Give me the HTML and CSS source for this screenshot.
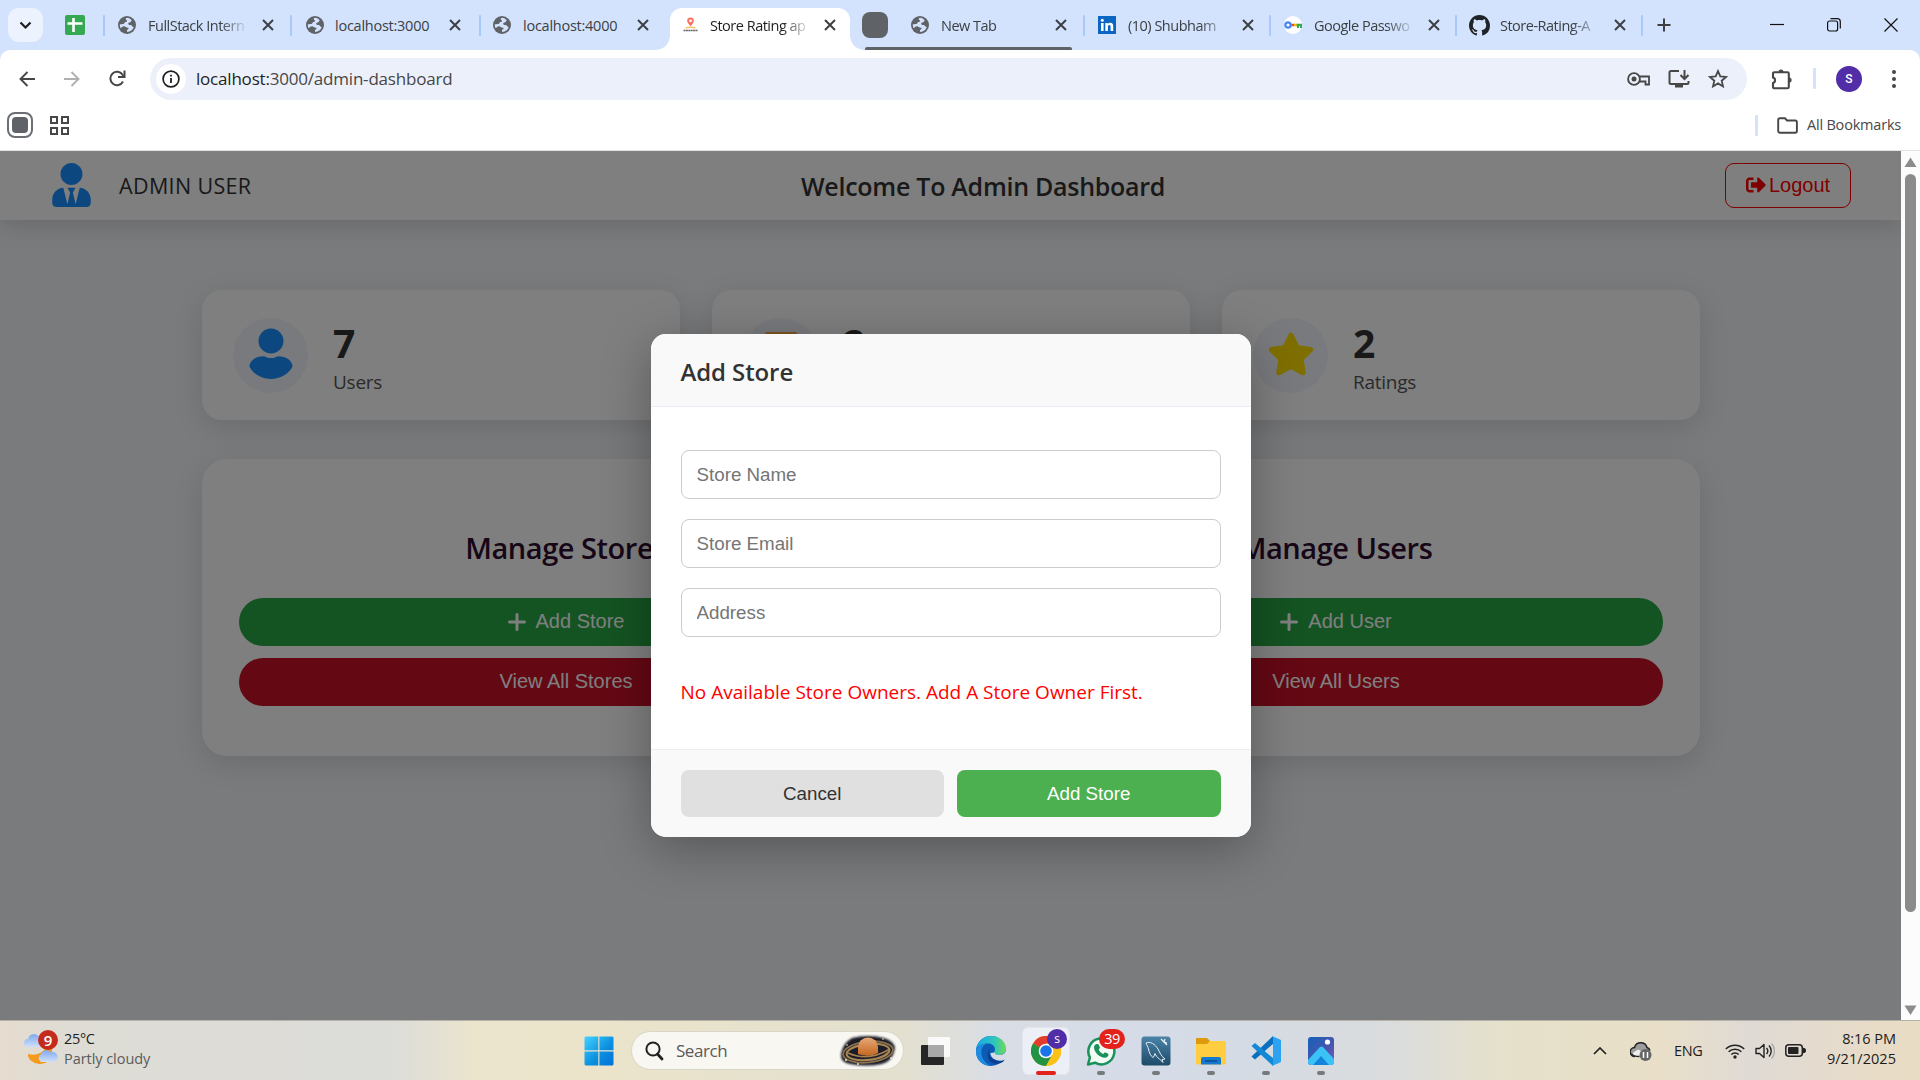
FILE: index.html
```html
<!DOCTYPE html>
<html lang="en">
<head>
<meta charset="utf-8">
<title>Store Rating app</title>
<link rel="stylesheet" href="styles.css">
</head>
<body>
<svg class="defs" width="0" height="0" aria-hidden="true">
  <symbol id="globe" viewBox="0 0 18 18"><circle cx="9" cy="9" r="9" fill="#5f6368"/><path d="M9.500 1.800c-2 .2-2.200 1.400-1.200 2.100 1.500 1 .2 2-.8 2.200-1.300.2-.6 1.700-2 1.800-1.400.1-2 .2-3.700.3a7.300 7.300 0 0 0 .8 4.100c1.200-.6 2.100-2.600 4.200-1.800 1.500.6 2 1.400 3.500 1.300 1 .3-.2 1.400-.9 2-.7.600-.4 1.400-.2 2.300 3.200-.2 5.700-2.400 6.600-5.100-.9-.1-1.200-.3-1.700-1.100-.8-1.300-2.300-.6-3.300-1.200-1.200-.8-.6-2.200.7-2.300 1.300 0 1.500-1.100 2.200-2.200a7 7 0 0 0-4.200-2.400z" fill="#d3e3fd"/></symbol>
  <symbol id="x" viewBox="0 0 12 12"><path d="M1 1l10 10M11 1L1 11" stroke="#3c4043" stroke-width="2" fill="none"/></symbol>
  <symbol id="plus" viewBox="0 0 18 18"><path d="M9 1.500v15M1.500 9h15" stroke="#fff" stroke-width="3" stroke-linecap="round"/></symbol>
</svg>

<div class="tabstrip">
  <div class="tab-search"><svg width="13" height="9" viewBox="0 0 13 9"><path d="M1.500 1.500l5 5 5-5" stroke="#1f1f1f" stroke-width="2.200" fill="none"/></svg></div>
  <div class="pinned"><svg width="20" height="20" viewBox="0 0 20 20"><rect width="20" height="20" rx="2" fill="#34a853"/><path d="M8.500 3v14M2.500 8.500h15" stroke="#fff" stroke-width="2.600"/></svg></div>
  <i class="sep"></i>
  <div class="tab t184"><svg class="fav"><use href="#globe"/></svg><span class="label">FullStack Intern</span><svg class="close"><use href="#x"/></svg></div>
  <i class="sep"></i>
  <div class="tab t186"><svg class="fav"><use href="#globe"/></svg><span class="label full">localhost:3000</span><svg class="close"><use href="#x"/></svg></div>
  <i class="sep"></i>
  <div class="tab t188"><svg class="fav"><use href="#globe"/></svg><span class="label full">localhost:4000</span><svg class="close"><use href="#x"/></svg></div>
  <div class="tab active"><svg class="fav" viewBox="0 0 18 18"><path d="M8.500 1.500a3.300 3.300 0 0 1 3.300 3.300c0 2.300-3.300 5.400-3.300 5.400s-3.300-3.100-3.300-5.400A3.300 3.300 0 0 1 8.500 1.500z" fill="#ff7061"/><circle cx="8.500" cy="4.800" r="1.400" fill="#fff"/><path d="M3.500 12q5-1.500 10 0" stroke="#ffc266" stroke-width="1.500" fill="none"/><path d="M1.500 14.500h14" stroke="#666" stroke-width="1.700" stroke-dasharray="2 .4"/></svg><span class="label">Store Rating ap</span><svg class="close"><use href="#x"/></svg></div>
  <div class="group"><i class="chip"></i>
    <div class="tab grouped"><svg class="fav"><use href="#globe"/></svg><span class="label">New Tab</span><svg class="close"><use href="#x"/></svg></div>
  </div>
  <i class="sep"></i>
  <div class="tab"><svg class="fav" viewBox="0 0 18 18"><rect width="18" height="18" fill="#0a66c2"/><path d="M3 7h2.600v8H3zM7.300 7h2.500v1.200C10.300 7.300 11.200 6.800 12.300 6.800c2.200 0 2.900 1.400 2.900 3.600V15h-2.600v-4.200c0-1.200-.3-1.900-1.200-1.900-1.100 0-1.500.8-1.500 1.900V15H7.300z" fill="#fff"/><circle cx="4.300" cy="4.300" r="1.500" fill="#fff"/></svg><span class="label">(10) Shubham</span><svg class="close"><use href="#x"/></svg></div>
  <i class="sep"></i>
  <div class="tab"><svg class="fav" viewBox="0 0 18 18"><circle cx="9" cy="9" r="9" fill="#fff"/><circle cx="4" cy="9" r="2.700" stroke="#4285f4" stroke-width="2.200" fill="none"/><path d="M7.500 9h3.500" stroke="#ea4335" stroke-width="2.400"/><path d="M10 9h3" stroke="#fbbc04" stroke-width="2.400"/><path d="M12.500 7.800H18V12h-2v-2h-1v2h-2z" fill="#34a853"/></svg><span class="label">Google Passwo</span><svg class="close"><use href="#x"/></svg></div>
  <i class="sep"></i>
  <div class="tab"><svg class="fav github" viewBox="0 0 16 16"><path fill="#1f2328" d="M8 0C3.580 0 0 3.580 0 8c0 3.540 2.290 6.530 5.470 7.590.4.070.55-.17.55-.38 0-.19-.01-.82-.01-1.490-2.010.37-2.530-.49-2.690-.94-.09-.23-.48-.94-.82-1.130-.28-.15-.68-.52-.01-.53.63-.01 1.080.58 1.230.82.72 1.210 1.870.87 2.330.66.070-.52.28-.87.51-1.070-1.780-.2-3.640-.89-3.640-3.950 0-.87.31-1.590.82-2.150-.08-.2-.36-1.020.08-2.120 0 0 .67-.21 2.200.82.64-.18 1.320-.27 2-.27s1.360.09 2 .27c1.530-1.040 2.200-.82 2.200-.82.44 1.100.16 1.920.08 2.120.51.56.82 1.270.82 2.150 0 3.070-1.870 3.750-3.650 3.950.29.25.54.73.54 1.480 0 1.070-.01 1.930-.01 2.200 0 .21.15.46.55.38A8.010 8.010 0 0 0 16 8c0-4.420-3.580-8-8-8z"/></svg><span class="label">Store-Rating-A</span><svg class="close"><use href="#x"/></svg></div>
  <i class="sep"></i>
  <svg class="newtab" width="14" height="14" viewBox="0 0 14 14"><path d="M7 .5v13M.5 7h13" stroke="#3c4043" stroke-width="2"/></svg>
  <div class="winctl">
    <svg width="14" height="14"><path d="M0 6.500h14" stroke="#111" stroke-width="1.200"/></svg>
    <svg width="14" height="14" viewBox="0 0 14 14"><rect x=".6" y="3" width="10" height="10" rx="2" fill="none" stroke="#111" stroke-width="1.200"/><path d="M3.500.7h6.800a3 3 0 0 1 3 3v6.800" fill="none" stroke="#111" stroke-width="1.200"/></svg>
    <svg width="14" height="14" viewBox="0 0 14 14"><path d="M.5.5l13 13M13.500.5l-13 13" stroke="#111" stroke-width="1.200"/></svg>
  </div>
</div>

<div class="chrome">
  <div class="toolbar">
    <svg width="16" height="16" viewBox="0 0 16 16"><path d="M16 8H1.500M8.500 1L1.500 8l7 7" stroke="#474747" stroke-width="1.900" fill="none"/></svg>
    <svg width="16" height="16" viewBox="0 0 16 16"><path d="M0 8h14.500M7.500 1l7 7-7 7" stroke="#b0b0b0" stroke-width="1.900" fill="none"/></svg>
    <svg width="17" height="17" viewBox="0 0 17 17"><path d="M14 11.500A6.700 6.700 0 1 1 13.800 5L15 6.500" stroke="#474747" stroke-width="2" fill="none"/><path d="M15.500.5v6.500H9" stroke="#474747" stroke-width="2" fill="none"/></svg>
    <div class="omnibox">
      <div class="info"><svg width="18" height="18" viewBox="0 0 18 18"><circle cx="9" cy="9" r="7.900" stroke="#1f1f1f" stroke-width="1.700" fill="none"/><path d="M9 8v5M9 4.800v1.800" stroke="#1f1f1f" stroke-width="1.800"/></svg></div>
      <span class="url"><b>localhost:</b>3000/admin-dashboard</span>
      <svg width="23" height="16" viewBox="0 0 23 16"><circle cx="7" cy="8" r="5.900" stroke="#474747" stroke-width="1.900" fill="none"/><circle cx="7" cy="8" r="2.500" fill="#474747"/><path d="M12.500 5.500H22v8h-3.500v-3h-6" stroke="#474747" stroke-width="1.800" fill="none"/></svg>
      <svg width="22" height="20" viewBox="0 0 22 20"><path d="M11 2H3a1.500 1.500 0 0 0-1.500 1.500v10A1.500 1.500 0 0 0 3 15h16a1.500 1.500 0 0 0 1.500-1.500V12" stroke="#474747" stroke-width="2" fill="none"/><path d="M7 15h8v3.500H7z" fill="#474747"/><path d="M16.500 1v8.500M12.500 6l4 4 4-4" stroke="#474747" stroke-width="2" fill="none"/></svg>
      <svg width="20" height="19" viewBox="0 0 20 19"><path d="M10 2l2.300 5.400 5.800.5-4.400 3.800 1.300 5.700-5-3-5 3 1.300-5.700L1.900 7.900l5.800-.5z" stroke="#474747" stroke-width="1.800" fill="none"/></svg>
    </div>
    <svg class="puzzle" width="22" height="22" viewBox="0 0 22 22"><path d="M2 5.500A1.300 1.300 0 0 1 3.300 4.200H16.500a1.300 1.300 0 0 1 1.300 1.300V19a1.300 1.300 0 0 1-1.300 1.300H3.300A1.300 1.300 0 0 1 2 19v-4a2.800 2.800 0 0 0 0-5.400z" stroke="#474747" stroke-width="2.100" fill="none"/><path d="M7.500 4a2.500 2.500 0 0 1 5 0zM18 9.500a2.600 2.600 0 0 1 0 5.200z" fill="#474747"/></svg>
    <i class="sep pale"></i>
    <div class="avatar">S</div>
    <svg class="menu" width="6" height="20" viewBox="0 0 6 20"><g fill="#474747"><circle cx="3" cy="3" r="2"/><circle cx="3" cy="10" r="2"/><circle cx="3" cy="17" r="2"/></g></svg>
  </div>
  <div class="bookmarks">
    <div class="bm-chip"><i></i></div>
    <svg width="19" height="19" viewBox="0 0 19 19"><g fill="none" stroke="#474747" stroke-width="2"><rect x="1" y="1" width="6" height="6"/><rect x="12" y="1" width="6" height="6"/><rect x="1" y="12" width="6" height="6"/><rect x="12" y="12" width="6" height="6"/></g></svg>
    <i class="sep pale"></i>
    <svg width="21" height="17" viewBox="0 0 21 17"><path d="M1.200 3A1.700 1.700 0 0 1 2.900 1.300H8L10 3.500h8.200A1.700 1.700 0 0 1 19.900 5.200v8.900a1.700 1.700 0 0 1-1.700 1.700H2.900a1.700 1.700 0 0 1-1.700-1.700z" stroke="#474747" stroke-width="1.900" fill="none"/></svg>
    <span class="allbm">All Bookmarks</span>
  </div>
</div>

<div class="viewport">
  <div class="page">
    <header class="header">
      <svg class="tie" width="39" height="44" viewBox="0 0 448 512"><path fill="#1890ff" d="M224 256c70.700 0 128-57.300 128-128S294.700 0 224 0 96 57.300 96 128s57.300 128 128 128zm95.800 32.600L272 480l-32-136 32-56h-96l32 56-32 136-47.800-191.400C56.900 292 0 350.300 0 422.400V464c0 26.500 21.500 48 48 48h352c26.500 0 48-21.500 48-48v-41.600c0-72.100-56.900-130.400-128.200-133.800z"/></svg>
      <span class="username">ADMIN USER</span>
      <h1>Welcome To Admin Dashboard</h1>
      <button class="logout"><svg width="20" height="20" viewBox="0 0 512 512"><path fill="#f00" d="M497 273L329 441c-15 15-41 4.500-41-17v-96H152c-13.300 0-24-10.700-24-24v-96c0-13.300 10.700-24 24-24h136V88c0-21.400 25.900-32 41-17l168 168c9.300 9.400 9.300 24.600 0 34zM192 436v-40c0-6.600-5.400-12-12-12H96c-17.700 0-32-14.300-32-32V160c0-17.700 14.300-32 32-32h84c6.600 0 12-5.400 12-12V76c0-6.600-5.400-12-12-12H96c-53 0-96 43-96 96v192c0 53 43 96 96 96h84c6.600 0 12-5.400 12-12z"/></svg>Logout</button>
    </header>
    <main class="content">
      <section class="stats">
        <article class="stat"><div class="circle"><svg width="44" height="52" viewBox="0 0 44 52"><circle cx="22" cy="13" r="12.500" fill="#1890ff"/><path d="M12 28.500q3-.8 5 .4 5 2.400 10 0 2-1.200 5-.4C39 29 43.500 34 43.500 38.500 40 46 31 51 22 51S4 46 .5 38.500C.5 34 5 29 12 28.500z" fill="#1890ff"/></svg></div><div class="figures"><strong>7</strong><span>Users</span></div></article>
        <article class="stat"><div class="circle"><svg width="48" height="44" viewBox="0 0 48 44"><path d="M9 0h30l8 15a6 6 0 0 1-12 0 6 6 0 0 1-11 0 6 6 0 0 1-11 0 6 6 0 0 1-12 0zM5 23h38v20H5z" fill="#ffa940"/></svg></div><div class="figures"><strong>2</strong><span>Stores</span></div></article>
        <article class="stat"><div class="circle"><svg width="48" height="46" viewBox="0 0 576 512"><path fill="#ffdf00" d="M259.300 17.800L194 150.200 47.900 171.500c-26.200 3.800-36.700 36.100-17.700 54.600l105.700 103-25 145.500c-4.500 26.300 23.200 46 46.400 33.700L288 439.600l130.700 68.700c23.200 12.200 50.900-7.400 46.400-33.700l-25-145.500 105.700-103c19-18.500 8.500-50.800-17.700-54.600L382 150.200 316.700 17.800c-11.700-23.600-45.600-23.900-57.400 0z"/></svg></div><div class="figures"><strong>2</strong><span>Ratings</span></div></article>
      </section>
      <section class="manage">
        <div class="panel"><h2>Manage Stores</h2><button class="pill green"><svg width="18" height="18"><use href="#plus"/></svg>Add Store</button><button class="pill red">View All Stores</button></div>
        <div class="panel"><h2>Manage Users</h2><button class="pill green"><svg width="18" height="18"><use href="#plus"/></svg>Add User</button><button class="pill red">View All Users</button></div>
      </section>
    </main>
    <div class="overlay">
      <form class="modal">
        <h3>Add Store</h3>
        <div class="fields">
          <input type="text" placeholder="Store Name">
          <input type="text" placeholder="Store Email">
          <input type="text" placeholder="Address">
          <p>No Available Store Owners. Add A Store Owner First.</p>
        </div>
        <div class="actions"><button type="button" class="cancel">Cancel</button><button type="button" class="submit">Add Store</button></div>
      </form>
    </div>
  </div>
  <div class="scrollbar"><svg width="13" height="11"><path d="M6.500 .5L12.500 10H.5z" fill="#8b8b8b"/></svg><i></i><svg width="13" height="11"><path d="M.5 .5h12L6.500 10z" fill="#8b8b8b"/></svg></div>
</div>

<div class="taskbar">
  <div class="weather">
    <svg width="36" height="38" viewBox="0 0 36 38"><defs><linearGradient id="cl" x2="0" y2="1"><stop stop-color="#7fa9ec"/><stop offset="1" stop-color="#cfe0fb"/></linearGradient></defs><path d="M4 18a4 4 0 0 1 0-8 6 6 0 0 1 11-2v10z" fill="url(#cl)"/><path d="M28 19v7a12 9.500 0 0 1-24-1c8 2 15-1 17-6z" fill="#f59a1b"/><path d="M17 33a4.500 4.500 0 0 1 0-8 6 6 0 0 1 10-2 5 5 0 0 1 3 10z" fill="url(#cl)"/><circle cx="24" cy="11" r="10" fill="#c42b1c"/><text x="24" y="16.500" text-anchor="middle" class="badge-text">9</text></svg>
    <div class="forecast"><span>25°C</span><small>Partly cloudy</small></div>
  </div>
  <svg class="start" width="30" height="30" viewBox="0 0 30 30"><defs><linearGradient id="win" x2="1" y2="1"><stop stop-color="#45d2ff"/><stop offset=".55" stop-color="#0d91e0"/><stop offset="1" stop-color="#0070d8"/></linearGradient></defs><path fill="url(#win)" d="M1.500.5H14.300V14.300H.5V1.500zM15.400.5H28.500l1 1V14.300H15.400zM.5 15.600H14.300V29.500H1.500l-1-1zM15.400 15.600H29.500V28.500l-1 1H15.400z"/></svg>
  <div class="search">
    <svg width="20" height="20" viewBox="0 0 20 20"><circle cx="9" cy="8" r="6.600" fill="none" stroke="#222" stroke-width="2"/><path d="M13.500 13l4.500 5" stroke="#222" stroke-width="2.800" stroke-linecap="round"/></svg>
    <span>Search</span>
    <svg class="saturn" width="60" height="34" viewBox="0 0 60 34"><defs><filter id="soft" x="-10%" y="-10%" width="120%" height="120%"><feGaussianBlur stdDeviation="1"/></filter><linearGradient id="pl" x2="0" y2="1"><stop stop-color="#e6a878"/><stop offset="1" stop-color="#c4681f"/></linearGradient></defs><path d="M14 4Q30 0 46 4q10 3 11 10-2 13-13 16-16 3-32 0Q2 28 3 20 5 9 14 4z" fill="#1c1a26" filter="url(#soft)"/><g transform="rotate(-6 30 18)" fill="none"><ellipse cx="30" cy="18" rx="25" ry="10.500" stroke="#8a7150" stroke-width="1.800"/><ellipse cx="30" cy="18" rx="21.500" ry="8" stroke="#a88555" stroke-width="2.200"/></g><path d="M20 20V13a10 9.500 0 0 1 20 0v6q-10 5-20 1z" fill="url(#pl)"/><path d="M10 19q20 9 42-4" stroke="#a88050" stroke-width="1.500" fill="none"/><g fill="#ffe9b0"><circle cx="8" cy="26" r="1"/><circle cx="20" cy="30" r=".9"/><circle cx="45" cy="5" r=".8"/><circle cx="53" cy="24" r=".9"/><circle cx="9" cy="11" r=".8"/></g></svg>
  </div>
  <div class="apps">
    <div class="app"><svg width="30" height="30" viewBox="0 0 30 30"><rect x="0" y="9" width="23" height="20" rx="1" fill="#262626"/><rect x="7" y="1" width="22" height="20" rx="1" fill="#fafafa"/><path d="M7 9h16v12H7z" fill="#a9a9a9"/></svg></div>
    <div class="app"><svg width="30" height="30" viewBox="0 0 30 30"><defs><linearGradient id="e1" x2="1"><stop stop-color="#1aa7e8"/><stop offset=".6" stop-color="#2cc5c0"/><stop offset="1" stop-color="#6fdc55"/></linearGradient></defs><circle cx="15" cy="15" r="15" fill="#0c5cb5"/><path d="M0 13A15 15 0 0 1 15 0c9 0 15 6 15 12.500 0 4-3 6.500-7 6.500-3.500 0-5-1.500-5-2.500s1-1.500 1-3.500c0-3-3-5.500-7-5.500C6 7.500 1 10 0 13z" fill="url(#e1)"/><path d="M0 15C1 9 6 7.500 10 8c-4 2-5 6-4.500 10 .6 5 4 9 9 12C6 30-.5 23 0 15z" fill="#1d8be0"/><path d="M15 12c-4 4-1 11 6 12.500 3 .5 6-.3 8-1.500l-1.200 2C25 28 19 29 15 26c-4-3-5-10 0-14z" fill="#0a3f91"/><path d="M18.500 16.500c0 1 1.500 2.500 4.500 2.500 4 0 6.500-2 7-5l1 6-2 3.500c-3 1.500-6 1.500-9 .5-4-1.500-5.500-4.500-5.500-7z" fill="#d6dbe6"/></svg></div>
    <div class="app current"><svg width="30" height="30" viewBox="0 0 30 30"><circle cx="15" cy="15" r="15" fill="#fbc116"/><path d="M15 15L2 7.500A15 15 0 0 1 28 7.500H15z" fill="#e33b2e"/><path d="M2 7.500A15 15 0 0 0 15 30l6.500-11.500L15 15z" fill="#229342"/><path d="M28 7.500H15l6.500 11L15 30A15 15 0 0 0 28 7.500z" fill="#fbc116"/><circle cx="15" cy="15" r="7.300" fill="#fff"/><circle cx="15" cy="15" r="5.800" fill="#1a73e8"/></svg><span class="badge violet">s</span><i class="mark red-mark"></i></div>
    <div class="app"><svg width="30" height="30" viewBox="0 0 30 30"><path d="M2 28.500l1.900-7A13 13 0 1 1 9 26.700z" fill="#f3fbf5" stroke="#18915a" stroke-width="2.500" stroke-linejoin="round"/><path d="M10.500 8l2 .2 1.500 3.600-1.300 2c1 2 2.500 3.400 4.500 4.200l1.800-1.800 3.500 1.800c0 2.500-1.500 3.700-3.700 3.700-5 0-10.800-5.500-10.800-10.500 0-1.500 1-2.700 2.500-3.200z" fill="#18915a"/></svg><span class="badge count">39</span><i class="mark"></i></div>
    <div class="app"><svg width="30" height="30" viewBox="0 0 30 30"><defs><linearGradient id="my" x2="0" y2="1"><stop stop-color="#4b84a8"/><stop offset="1" stop-color="#1e4a69"/></linearGradient></defs><rect x=".5" y=".5" width="29" height="29" rx="3" fill="url(#my)"/><path d="M5 7c4-2 9 1 12 6 2 4 3 7 7 10l-3 .5 1 3-4-4c-2-1-3-3-4-5-1 2-1 4-2 4-2-1-4-5-4.500-8.500C7 11 6 9.500 5 7z" fill="none" stroke="#e6f1f7" stroke-width="1"/><path d="M20 3l3 3M24 3l-1 3 3 1M23 6l3 3" stroke="#e6f1f7" stroke-width="1.300" fill="none"/></svg><i class="mark"></i></div>
    <div class="app"><svg width="30" height="30" viewBox="0 0 30 30"><path d="M0 3a1 1 0 0 1 1-1h10l3 3-2 5H0z" fill="#dc9a0c"/><path d="M0 8h11l3-3h15a1 1 0 0 1 1 1v21a1.500 1.500 0 0 1-1.500 1.500h-27A1.500 1.500 0 0 1 0 27z" fill="#ffcd3f"/><path d="M5 28.500V23a2 2 0 0 1 2-2h16a2 2 0 0 1 2 2v5.500z" fill="#1479cf"/><path d="M9 25h12" stroke="#0d4e93" stroke-width="1.500"/></svg><i class="mark"></i></div>
    <div class="app"><svg width="30" height="30" viewBox="0 0 30 30"><path d="M22 0v8L4 23.500 0.500 20.500z" fill="#0a6fbe"/><path d="M22 30v-8L4 7 .5 10z" fill="#1389d6"/><path d="M21 0l8 3.500a1.500 1.500 0 0 1 1 1.500v20a1.500 1.500 0 0 1-1 1.500L21 30l1-2V2z" fill="#2ba3f0"/></svg><i class="mark"></i></div>
    <div class="app"><svg width="26" height="28" viewBox="0 0 26 28"><defs><linearGradient id="ph" x2="1" y2="1"><stop stop-color="#1461b8"/><stop offset=".6" stop-color="#4a55b0"/><stop offset="1" stop-color="#8857b8"/></linearGradient></defs><rect width="26" height="28" rx="3" fill="url(#ph)"/><path d="M0 23L12 10q1.500-1 3 0l11 12v3a3 3 0 0 1-3 3H3a3 3 0 0 1-3-3z" fill="#3bc3f5"/><path d="M5 28l8-9 8 9z" fill="#1383dc"/><circle cx="19.500" cy="5" r="2.600" fill="#fff"/></svg><i class="mark"></i></div>
  </div>
  <div class="tray">
    <svg width="14" height="8" viewBox="0 0 14 8"><path d="M1 7l6-6 6 6" stroke="#222" stroke-width="1.700" fill="none"/></svg>
    <svg class="cloud" width="22" height="20" viewBox="0 0 22 20"><path d="M5 15.500a4.500 4.500 0 0 1-.5-9A6.500 6.500 0 0 1 17 6.500a4.500 4.500 0 0 1 3 3" fill="#9d9d9d" stroke="#222" stroke-width="1.500"/><path d="M5 15.500l-3-3 6-4 6 3-4 4z" fill="#eee"/><path d="M1.500 12.500q1.500 3 8 3" stroke="#222" stroke-width="1.500" fill="none"/><circle cx="15.500" cy="14" r="6" fill="#666"/><path d="M13.500 11v6M17.500 11v6" stroke="#fff" stroke-width="1.500"/></svg>
    <span class="lang">ENG</span>
    <svg class="wifi" width="20" height="16" viewBox="0 0 20 16"><g fill="none" stroke="#222" stroke-width="1.500"><path d="M.8 6a13 13 0 0 1 18.400 0M3.600 8.800a9 9 0 0 1 12.800 0M6.300 11.500a5.300 5.300 0 0 1 7.400 0"/></g><circle cx="10" cy="14" r="1.700" fill="#222"/></svg>
    <svg class="sound" width="20" height="18" viewBox="0 0 20 18"><path d="M1 6.500h3.500L9 2.500v13l-4.500-4H1z" fill="none" stroke="#222" stroke-width="1.400" stroke-linejoin="round"/><path d="M11.500 6a4.500 4.500 0 0 1 0 6M14 3.500a8 8 0 0 1 0 11" fill="none" stroke="#222" stroke-width="1.400"/><path d="M16.500 1.500a11 11 0 0 1 0 15" fill="none" stroke="#aaa" stroke-width="1.300"/></svg>
    <svg class="battery" width="21" height="13" viewBox="0 0 21 13"><rect x=".8" y=".8" width="16.500" height="11.400" rx="3" fill="none" stroke="#222" stroke-width="1.500"/><rect x="3" y="3" width="10.500" height="7" rx="1" fill="#222"/><path d="M18 3.800c2 0 3 1 3 2.700s-1 2.700-3 2.700z" fill="#222"/></svg>
    <div class="clock"><span class="time">8:16 PM</span><span class="date">9/21/2025</span></div>
  </div>
</div>
</body>
</html>
```
FILE: styles.css
```css
* { box-sizing: border-box; }
body {
  margin: 0;
  width: 1920px;
  height: 1080px;
  overflow: hidden;
  display: flex;
  flex-direction: column;
  background: #d3e3fd;
  font-family: "Open Sans", "Noto Sans", sans-serif;
}
svg { flex: none; display: block; }
.defs { position: absolute; }
h1, h2, h3, p { margin: 0; }
button, input { font-family: "Liberation Sans", Arial, sans-serif; margin: 0; }

/* tab strip */
.tabstrip { height: 50px; flex: none; display: flex; align-items: center; }
.tab-search {
  width: 35px; height: 34px; margin-left: 8px; border-radius: 11px;
  background: #ecf2fe; display: flex; align-items: center; justify-content: center;
}
.pinned { width: 60px; padding-left: 22px; }
.sep { flex: none; width: 2px; height: 21px; margin-right: 1px; border-radius: 1px; background: #a8c7fa; }
.tab { width: 183px; height: 42px; flex: none; align-self: flex-end; padding: 0 0 8px 12px; display: flex; align-items: center; }
.tab .fav { width: 18px; height: 18px; margin-right: 12px; }
.tab .github { width: 21px; height: 21px; margin: 0 10px 0 -1px; }
.label {
  width: 102px; margin-right: 12px; font-size: 14.500px; letter-spacing: -0.500px; color: #3c4043;
  white-space: nowrap;
  mask-image: linear-gradient(90deg, #000 72px, transparent 101px);
}
.full { mask-image: none; letter-spacing: -0.250px; }
.close { width: 12px; height: 12px; }
.t184 { width: 184px; }
.t186 { width: 186px; padding-left: 13px; }
.t186 .fav { margin-right: 11px; }
.t188 { width: 188px; padding-left: 11px; }
.active { width: 180px; background: #fff; border-radius: 12px 12px 0 0; position: relative; }
.active .fav { margin-right: 10px; }
.active::before, .active::after {
  content: ""; position: absolute; bottom: 0; width: 14px; height: 14px;
}
.active::before { left: -14px; background: radial-gradient(circle at 0 0, transparent 13.500px, #fff 14px); }
.active::after { right: -14px; background: radial-gradient(circle at 100% 0, transparent 13.500px, #fff 14px); }
.active .label { color: #1f1f1f; }
.group { width: 233px; height: 50px; display: flex; align-items: center; padding-left: 12px; position: relative; }
.group::after { content: ""; position: absolute; left: 15px; right: 11px; bottom: 0; height: 3px; border-radius: 2px 2px 0 0; background: #5f6368; }
.chip { width: 26px; height: 26px; border-radius: 8px; background: #5f6368; }
.grouped { width: 195px; padding-left: 23px; }
.newtab { margin-left: 13px; }
.winctl { margin-left: auto; margin-right: 22px; display: flex; gap: 43px; }

/* toolbar and bookmarks */
.chrome { height: 101px; flex: none; background: #fff; border-radius: 10px 10px 0 0; border-bottom: 1px solid #dfe3e8; }
.toolbar { height: 57px; display: flex; align-items: center; padding-left: 19px; }
.toolbar > svg { margin-right: 29px; }
.toolbar > svg:nth-child(3) { margin-right: 24px; }
.omnibox {
  width: 1597px; height: 42px; border-radius: 21px; background: #ecf0fa;
  display: flex; align-items: center; padding: 0 19px 0 6px; flex: none;
}
.info { width: 30px; height: 30px; border-radius: 50%; background: #fff; display: flex; align-items: center; justify-content: center; }
.url { margin-left: 10px; margin-right: auto; font-size: 17px; letter-spacing: -0.200px; color: #474747; }
.url b { font-weight: 400; color: #1f1f1f; }
.omnibox > svg + svg { margin-left: 18px; }
.toolbar > .puzzle { margin: 0 20px 0 24px; }
.pale { background: #d3e3fd; width: 3px; margin: 0; }
.avatar {
  flex: none; width: 26px; height: 26px; margin: 0 29px 0 20px; border-radius: 50%; background: #512da8; color: #fff;
  font: 500 12px/26px Roboto, sans-serif; text-align: center;
}
.toolbar > .menu { margin-right: 0; }
.bookmarks { height: 42px; padding: 0 18px 6px 7px; display: flex; align-items: center; }
.bm-chip { width: 26px; height: 26px; border: 2px solid #6b6f74; border-radius: 8px; display: flex; align-items: center; justify-content: center; margin-right: 17px; }
.bm-chip i { width: 16px; height: 16px; border-radius: 4px; background: #5f6368; }
.bookmarks .pale { margin-left: auto; margin-right: 19px; }
.allbm { margin: -2px 0 0 9px; width: 95px; font-size: 14.500px; letter-spacing: -0.200px; color: #474747; white-space: nowrap; }

/* web page */
.viewport { height: 869px; flex: none; display: flex; }
.page { width: 1901px; position: relative; background: #f4f6fa; overflow: hidden; }
.header {
  height: 69px; padding: 0 50px 0 52px; display: flex; align-items: center;
  background: #fff; box-shadow: 0 5px 25px rgba(0, 0, 0, .15);
}
.tie { margin-right: 28px; margin-top: -2px; }
.username { width: 682px; font-size: 21.500px; font-weight: 500; color: #333; letter-spacing: 0.350px; }
h1 { font-size: 25px; font-weight: 600; color: #333; white-space: nowrap; letter-spacing: -0.270px; }
.logout {
  width: 126px; height: 45px; margin-left: auto; padding: 0 0 1px; border: 1px solid #f00; border-radius: 9px;
  background: #fff; color: #f00; font-size: 20px; display: flex; align-items: center; justify-content: center; gap: 3px;
}
.content { width: 1498px; margin: 70px 0 0 202px; }
.stats { display: grid; grid-template-columns: repeat(3, 1fr); gap: 32px; }
.stat {
  height: 130px; border-radius: 20px; background: #fff; box-shadow: 0 8px 30px rgba(0, 0, 0, .12);
  display: flex; align-items: center; padding-left: 31px; gap: 25px;
}
.circle { width: 75px; height: 75px; border-radius: 50%; background: #f0f4fa; display: flex; align-items: center; justify-content: center; }
.circle svg { margin-top: -2px; }
.figures { display: flex; flex-direction: column; color: #333; padding-top: 6px; }
.figures strong { font-size: 39px; line-height: 48px; }
.figures span { font-size: 19px; line-height: 30px; color: #555; letter-spacing: -0.250px; }
.manage {
  height: 297px; margin-top: 39px; padding: 69px 37px 0; border-radius: 25px; background: #fff;
  box-shadow: 0 8px 30px rgba(0, 0, 0, .12); display: flex; justify-content: space-between;
}
.panel { width: 654px; display: flex; flex-direction: column; align-items: stretch; }
h2 { font-size: 29px; line-height: 40px; height: 70px; font-weight: 600; color: #2f0d2e; text-align: center; letter-spacing: -0.450px; }
.pill {
  height: 48px; margin-bottom: 12px; border: 0; border-radius: 24px; color: #fff; font-size: 20px; padding: 0 0 1px;
  display: flex; align-items: center; justify-content: center; gap: 10px;
}
.green { background: #28a745; }
.red { background: #c81028; }

/* dialog */
.overlay { position: absolute; inset: 0; background: rgba(0, 0, 0, .5); display: flex; align-items: center; justify-content: center; }
.modal {
  width: 600px; height: 503px; border-radius: 15px; overflow: hidden; background: #fff;
  box-shadow: 0 12px 50px rgba(0, 0, 0, .3); display: flex; flex-direction: column;
}
h3 { height: 73px; padding: 0 30px; border-bottom: 1px solid #e9eef4; background: #f9f9f9; color: #333; font-size: 24px; line-height: 75px; font-weight: 600; letter-spacing: -0.100px; }
.fields { flex: 1; padding: 43px 30px 0; display: flex; flex-direction: column; gap: 20px; }
.fields input { height: 49px; padding: 0 15px; border: 1px solid #ccc; border-radius: 8px; font-size: 18.750px; color: #333; outline: 0; }
.fields input::placeholder { color: #757575; }
.fields p { margin-top: 20px; font-size: 19px; line-height: 30px; color: #f00; white-space: nowrap; }
.actions { height: 88px; padding: 20px 30px; border-top: 1px solid #eee; background: #f9f9f9; display: flex; gap: 13px; }
.actions button { flex: 1; border: 0; border-radius: 8px; font-size: 18.750px; padding: 0; }
.cancel { background: #e0e0e0; color: #333; }
.submit { background: #4caf50; color: #fff; }

.scrollbar { width: 19px; background: #fcfcfc; display: flex; flex-direction: column; align-items: center; padding: 6px 0 4px; }
.scrollbar i { width: 11px; height: 738px; margin: 6px 0 auto; border-radius: 6px; background: #8b8b8b; }

/* taskbar */
.taskbar {
  height: 60px; flex: none; border-top: 1px solid #b5b0a8; display: flex; align-items: center;
  background: linear-gradient(90deg, #e6dccf 0, #dedcd5 70px, #dcdcd9 390px, #ebe5cd 475px, #ebe4cb 600px, #e3e0cf 900px, #d9dde5 1000px, #d5dce8 1130px, #d5dbe4 1250px, #dadcdd 1390px, #e6e1cb 1500px, #e9dfc8 1660px, #dfdad5 1750px, #e8dcc8 1870px, #e9dcc4 1920px);
}
.weather { width: 584px; padding-left: 24px; display: flex; align-items: center; gap: 4px; }
.weather > svg { margin-top: -6px; }
.badge-text { font: 600 15px "Open Sans", sans-serif; fill: #fff; }
.forecast { margin-top: -3px; display: flex; flex-direction: column; font-size: 14.500px; line-height: 20px; letter-spacing: -0.350px; color: #1c1c1c; }
.forecast small { font-size: inherit; color: #5b5b5b; letter-spacing: -0.050px; }
.search {
  width: 273px; height: 39px; margin-left: 17px; border-radius: 20px; background: #f8f7f2; border: 1px solid #d9d5c8;
  display: flex; align-items: center; padding: 0 5px 0 12px; font-size: 17px; letter-spacing: -0.450px; color: #5a5a5a;
}
.search span { margin: 0 auto 0 12px; }
.apps { display: flex; margin-left: 8px; }
.app { width: 48px; height: 48px; margin-right: 7px; display: flex; align-items: center; justify-content: center; position: relative; }
.current { background: #eceff5; border: 1px solid #e2e5ec; border-radius: 6px; }
.mark { position: absolute; left: 20px; bottom: 0; width: 8px; height: 4px; border-radius: 2px; background: #77797c; }
.red-mark { width: 20px; left: 13px; bottom: -1px; background: #e3231b; }
.badge { position: absolute; border-radius: 10px; color: #fff; text-align: center; height: 20px; line-height: 20px; top: 2px; }
.violet { width: 20px; left: 24px; top: 1px; background: #512da8; font-size: 12px; line-height: 19px; }
.count { width: 26px; left: 22px; background: #e3231b; font-size: 14.500px; letter-spacing: -0.500px; }
.tray { margin-left: auto; padding-right: 24px; display: flex; align-items: center; color: #1c1c1c; font-size: 14.500px; }
.cloud { margin: 0 22px 0 23px; }
.lang { width: 29px; letter-spacing: -0.300px; }
.wifi { margin-left: 22px; }
.sound { margin: 0 10px; }
.clock { width: 70px; margin: -3px 0 0 20px; display: flex; flex-direction: column; align-items: flex-end; line-height: 20px; white-space: nowrap; }
.date { letter-spacing: 0.050px; }
.time { letter-spacing: -0.050px; }
```
